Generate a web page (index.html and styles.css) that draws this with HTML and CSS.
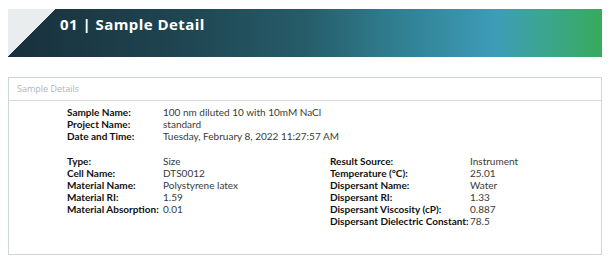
FILE: index.html
```html
<!DOCTYPE html>
<html>
<head>
<meta charset="utf-8">
<link rel="stylesheet" href="styles.css">
</head>
<body>
<div class="banner">
  <div class="banner-title">01 | Sample Detail</div>
</div>
<div class="panel">
  <div class="panel-head">Sample Details</div>
  <div class="panel-body">
    <div class="kv kv-top">
      <div class="k">Sample Name:</div><div class="v">100 nm diluted 10 with 10mM NaCl</div>
      <div class="k">Project Name:</div><div class="v">standard</div>
      <div class="k">Date and Time:</div><div class="v">Tuesday, February 8, 2022 11:27:57 AM</div>
    </div>
    <div class="cols">
      <div class="kv kv-left">
        <div class="k">Type:</div><div class="v">Size</div>
        <div class="k">Cell Name:</div><div class="v">DTS0012</div>
        <div class="k">Material Name:</div><div class="v">Polystyrene latex</div>
        <div class="k">Material RI:</div><div class="v">1.59</div>
        <div class="k">Material Absorption:</div><div class="v">0.01</div>
      </div>
      <div class="kv kv-right">
        <div class="k">Result Source:</div><div class="v">Instrument</div>
        <div class="k">Temperature (°C):</div><div class="v">25.01</div>
        <div class="k">Dispersant Name:</div><div class="v">Water</div>
        <div class="k">Dispersant RI:</div><div class="v">1.33</div>
        <div class="k">Dispersant Viscosity (cP):</div><div class="v">0.887</div>
        <div class="k">Dispersant Dielectric Constant:</div><div class="v">78.5</div>
      </div>
    </div>
  </div>
</div>
</body>
</html>
```
FILE: styles.css
```css
html, body { background: #ffffff; }
body {
  margin: 9px 10px 0 8px;
  font-family: "Lato", "Open Sans", sans-serif;
  color: #1a1a1a;
}
.banner {
  height: 48px;
  box-sizing: border-box;
  padding-top: 5px;
  background:
    linear-gradient(to bottom right, #e9edee 0, #e9edee 50%, transparent 50%) left top / 47px 48px no-repeat,
    linear-gradient(to right, #18303b 0%, #1f4652 30%, #265c69 50%, #307e90 65%, #3e9cb8 82%, #3ca68c 91%, #37aa5c 100%);
  display: flex;
  align-items: flex-start;
}
.banner-title {
  margin-left: 52px;
  color: #ffffff;
  font-family: "Open Sans", sans-serif;
  font-weight: 700;
  font-size: 15px;
  line-height: 20px;
  letter-spacing: 0.45px;
}
.panel {
  margin-top: 20px;
  height: 178px;
  box-sizing: border-box;
  border: 1px solid #cfd6d8;
}
.panel-head {
  height: 22px;
  border-bottom: 1px solid #d6dcde;
  color: #b4b4b4;
  font-family: "Open Sans", sans-serif;
  font-size: 9px;
  line-height: 22px;
  padding-left: 8px;
}
.panel-body {
  padding: 5px 0 0 58px;
  font-size: 10px;
  line-height: 12px;
}
.kv { display: grid; }
.kv-top { grid-template-columns: 96px auto; }
.cols { display: flex; margin-top: 13px; }
.kv-left { grid-template-columns: 96px auto; width: 263px; align-content: start; }
.kv-right { grid-template-columns: 140px auto; align-content: start; }
.k { font-weight: 700; color: #111; white-space: nowrap; }
.v { color: #3a3a3a; white-space: nowrap; }
```
